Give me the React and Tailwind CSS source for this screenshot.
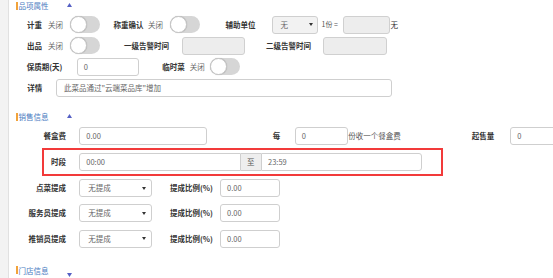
import React from "react";

function Toggle({ ml }) {
  return (
    <div className={`${ml} shrink-0 w-[30px] h-[17px] rounded-full bg-[#d6d6d6] flex items-center`}>
      <div className="w-[17px] h-[17px] rounded-full bg-white border border-[#c6c6c6] shadow-[0_0_1px_rgba(0,0,0,0.25)]" />
    </div>
  );
}

function Caret() {
  return (
    <svg width="4" height="3" viewBox="0 0 4 3" className="shrink-0">
      <path d="M0 0 L4 0 L2 3 Z" fill="#333" />
    </svg>
  );
}

function Header({ title, down, mt }) {
  return (
    <div className={`${mt} h-[12px] flex items-center shrink-0`}>
      <div className="ml-[7px] w-[1.5px] h-[8px] bg-[#f2a33a] shrink-0" />
      <span className="ml-[1px] w-[30px] shrink-0 whitespace-nowrap text-[7.5px] text-[#4a7bbf]">{title}</span>
      <svg
        width="5"
        height="4"
        viewBox="0 0 5 4"
        className={`ml-[18px] shrink-0 ${down ? "mt-[9px]" : "-mt-[2px]"}`}
      >
        {down ? <path d="M0 0 L5 0 L2.5 4 Z" fill="#5560c4" /> : <path d="M0 4 L5 4 L2.5 0 Z" fill="#5560c4" />}
      </svg>
    </div>
  );
}

const lbl = "shrink-0 whitespace-nowrap font-bold text-[#333]";
const off = "shrink-0 whitespace-nowrap text-[#666]";
const inp =
  "shrink-0 h-full border border-[#cfcfcf] rounded-[3px] bg-white flex items-center pl-[6px] text-[#666]";
const gray = "shrink-0 h-full border border-[#d0d0d0] rounded-[3px] bg-[#ededed]";

function CommRow({ label, mt }) {
  return (
    <div className={`${mt} h-[17.5px] flex items-center shrink-0`}>
      <span className={`${lbl} w-[57px] text-right`}>{label}</span>
      <div className={`${inp} ml-[13.3px] w-[72.4px] pl-[8px] pr-[5px] justify-between`}>
        <span>无提成</span>
        <Caret />
      </div>
      <span className={`${lbl} ml-[18.3px] w-[43px]`}>提成比例(%)</span>
      <div className={`${inp} ml-[7px] w-[60px]`}>0.00</div>
    </div>
  );
}

export default function App() {
  return (
    <div className="w-[553px] h-[278px] overflow-hidden flex bg-white font-['Noto_Sans_CJK_SC','Noto_Sans',sans-serif] text-[7.5px] leading-none">
      <div className="w-[8px] h-full bg-[#f3f3f3] shrink-0" />
      <div className="w-[1px] h-full bg-[#e1e1e1] shrink-0" />
      <div className="flex-1 flex flex-col min-w-0">
        <Header title="品项属性" mt="mt-0" />

        {/* row 1 */}
        <div className="mt-[4px] h-[17.5px] flex items-center shrink-0">
          <span className={`${lbl} ml-[18px] w-[16px]`}>计重</span>
          <span className={`${off} ml-[5px] w-[15px]`}>关闭</span>
          <Toggle ml="ml-[6.5px]" />
          <span className={`${lbl} ml-[14px] w-[30px]`}>称重确认</span>
          <span className={`${off} ml-[4.5px] w-[15px]`}>关闭</span>
          <Toggle ml="ml-[6.5px]" />
          <span className={`${lbl} ml-[26px] w-[30px]`}>辅助单位</span>
          <div className="ml-[16px] w-[46px] h-full shrink-0 border border-[#cfcfcf] rounded-[3px] bg-[#f2f2f2] flex items-center justify-between pl-[8px] pr-[4px] text-[#666]">
            <span>无</span>
            <Caret />
          </div>
          <span className="ml-[4px] w-[17px] shrink-0 whitespace-nowrap text-[#555] text-[7px]">1份 =</span>
          <div className={`${gray} ml-[4px] w-[47px]`} />
          <span className="ml-[1px] shrink-0 text-[#333]">无</span>
        </div>

        {/* row 2 */}
        <div className="mt-[3.5px] h-[17.5px] flex items-center shrink-0">
          <span className={`${lbl} ml-[18px] w-[16px]`}>出品</span>
          <span className={`${off} ml-[5px] w-[15px]`}>关闭</span>
          <Toggle ml="ml-[6.5px]" />
          <span className={`${lbl} ml-[24.5px] w-[44px]`}>一级告警时间</span>
          <div className={`${gray} ml-[13.7px] w-[63.3px]`} />
          <span className={`${lbl} ml-[21px] w-[44px]`}>二级告警时间</span>
          <div className={`${gray} ml-[13.3px] w-[63.4px]`} />
        </div>

        {/* row 3 */}
        <div className="mt-[3.5px] h-[17.5px] flex items-center shrink-0">
          <span className={`${lbl} ml-[17.7px] w-[35px]`}>保质期(天)</span>
          <div className={`${inp} ml-[15px] w-[62.6px]`}>0</div>
          <span className={`${lbl} ml-[23px] w-[22.5px]`}>临时菜</span>
          <span className={`${off} ml-[5px] w-[15px]`}>关闭</span>
          <Toggle ml="ml-[5.7px]" />
        </div>

        {/* row 4 */}
        <div className="mt-[3.5px] h-[17.5px] flex items-center shrink-0">
          <span className={`${lbl} ml-[18.3px] w-[15px]`}>详情</span>
          <div className={`${inp} ml-[13.7px] w-[335.7px] pl-[7px]`}>此菜品通过"云端菜品库"增加</div>
        </div>

        <Header title="销售信息" mt="mt-[14.5px]" />

        {/* row 5 */}
        <div className="mt-[4.2px] h-[18px] flex items-center shrink-0">
          <span className={`${lbl} w-[57px] text-right`}>餐盒费</span>
          <div className={`${inp} ml-[13.3px] w-[127.4px]`}>0.00</div>
          <span className={`${lbl} ml-[66px] w-[7.5px]`}>每</span>
          <div className={`${inp} ml-[14.5px] w-[53px]`}>0</div>
          <span className="ml-[0.5px] w-[52.5px] shrink-0 whitespace-nowrap text-[#555]">份收一个餐盒费</span>
          <span className={`${lbl} ml-[71px] w-[22.5px]`}>起售量</span>
          <div className={`${inp} ml-[16px] w-[60px]`}>0</div>
        </div>

        {/* red highlighted row */}
        <div className="mt-[2.6px] ml-[33.3px] w-[400.4px] h-[28.4px] shrink-0 border-2 border-[#f23a3a] flex items-center">
          <span className={`${lbl} w-[21.7px] text-right`}>时段</span>
          <div className="ml-[13.3px] h-[18.4px] flex shrink-0">
            <div className="w-[161.4px] h-full border border-[#cfcfcf] rounded-l-[3px] bg-white flex items-center pl-[6px] text-[#666]">
              00:00
            </div>
            <div className="w-[20.3px] h-full border-y border-[#cfcfcf] bg-[#eeeeee] flex items-center justify-center text-[#555]">
              至
            </div>
            <div className="w-[161.3px] h-full border border-[#cfcfcf] rounded-r-[3px] bg-white flex items-center pl-[6px] text-[#666]">
              23:59
            </div>
          </div>
        </div>

        <CommRow label="点菜提成" mt="mt-[3.3px]" />
        <CommRow label="服务员提成" mt="mt-[7.5px]" />
        <CommRow label="推销员提成" mt="mt-[8.2px]" />

        <Header title="门店信息" down mt="mt-[16.8px]" />
      </div>
    </div>
  );
}
